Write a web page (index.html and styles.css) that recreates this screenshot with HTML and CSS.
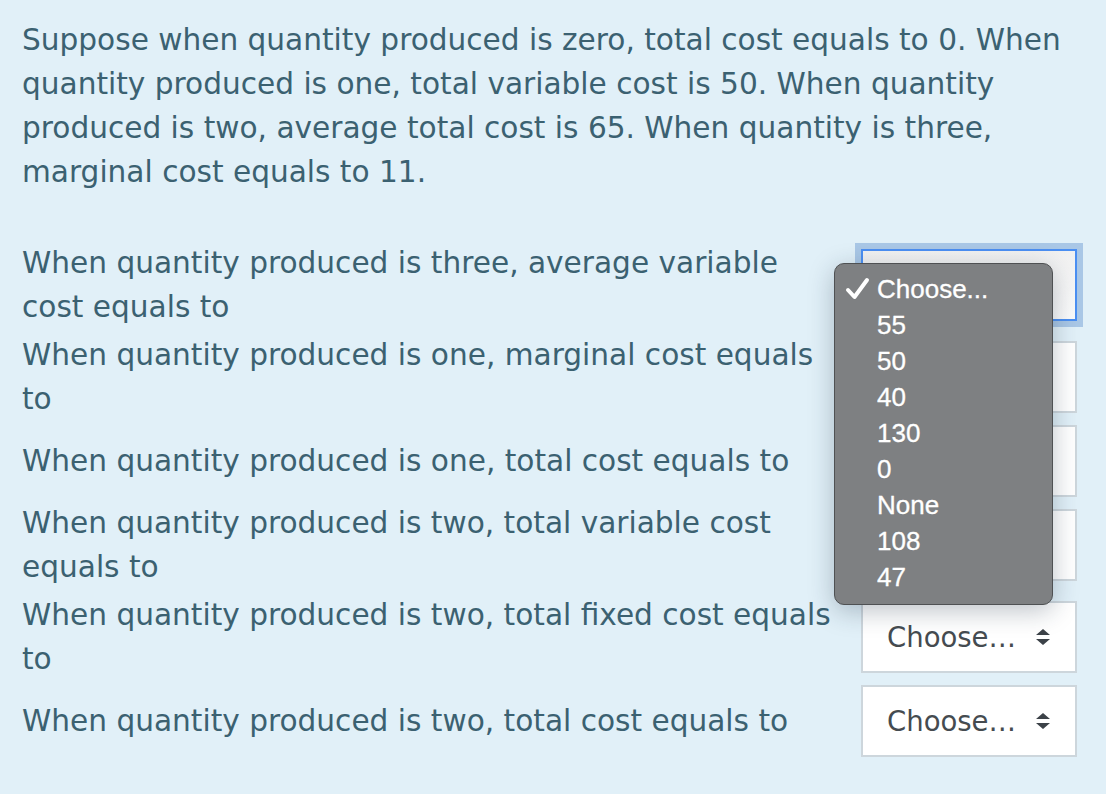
FILE: index.html
```html
<!DOCTYPE html>
<html lang="en">
<head>
<meta charset="utf-8">
<title>Question</title>
<link rel="stylesheet" href="styles.css">
</head>
<body>
<div class="page">
  <p class="intro">Suppose when quantity produced is zero, total cost equals to 0. When quantity produced is one, total variable cost is 50. When quantity produced is two, average total cost is 65. When quantity is three, marginal cost equals to 11.</p>
  <div class="rows">
    <div class="row">
      <div class="label">When quantity produced is three, average variable cost equals to</div>
      <div class="select-wrap">
        <div class="select focused">
          <span class="value">Choose…</span>
          <svg class="arrows" width="16" height="18" viewBox="0 0 16 18"><path d="M8 1 L15 7 L1 7 Z M1 11 L15 11 L8 17 Z" fill="#3c4248"/></svg>
        </div>
        <ul class="menu">
          <li class="checked"><svg class="check" width="26" height="24" viewBox="0 0 26 24"><path d="M3 13 L9.5 20 L22 3" fill="none" stroke="#fff" stroke-width="4" stroke-linecap="round" stroke-linejoin="round"/></svg>Choose...</li>
          <li>55</li>
          <li>50</li>
          <li>40</li>
          <li>130</li>
          <li>0</li>
          <li>None</li>
          <li>108</li>
          <li>47</li>
        </ul>
      </div>
    </div>
    <div class="row">
      <div class="label">When quantity produced is one, marginal cost equals to</div>
      <div class="select-wrap">
        <div class="select"><span class="value">Choose…</span><svg class="arrows" width="16" height="18" viewBox="0 0 16 18"><path d="M8 1 L15 7 L1 7 Z M1 11 L15 11 L8 17 Z" fill="#3c4248"/></svg></div>
      </div>
    </div>
    <div class="row">
      <div class="label">When quantity produced is one, total cost equals to</div>
      <div class="select-wrap">
        <div class="select"><span class="value">Choose…</span><svg class="arrows" width="16" height="18" viewBox="0 0 16 18"><path d="M8 1 L15 7 L1 7 Z M1 11 L15 11 L8 17 Z" fill="#3c4248"/></svg></div>
      </div>
    </div>
    <div class="row">
      <div class="label">When quantity produced is two, total variable cost equals to</div>
      <div class="select-wrap">
        <div class="select"><span class="value">Choose…</span><svg class="arrows" width="16" height="18" viewBox="0 0 16 18"><path d="M8 1 L15 7 L1 7 Z M1 11 L15 11 L8 17 Z" fill="#3c4248"/></svg></div>
      </div>
    </div>
    <div class="row">
      <div class="label">When quantity produced is two, total fixed cost equals to</div>
      <div class="select-wrap">
        <div class="select"><span class="value">Choose…</span><svg class="arrows" width="16" height="18" viewBox="0 0 16 18"><path d="M8 1 L15 7 L1 7 Z M1 11 L15 11 L8 17 Z" fill="#3c4248"/></svg></div>
      </div>
    </div>
    <div class="row">
      <div class="label">When quantity produced is two, total cost equals to</div>
      <div class="select-wrap">
        <div class="select"><span class="value">Choose…</span><svg class="arrows" width="16" height="18" viewBox="0 0 16 18"><path d="M8 1 L15 7 L1 7 Z M1 11 L15 11 L8 17 Z" fill="#3c4248"/></svg></div>
      </div>
    </div>
  </div>
</div>
</body>
</html>
```
FILE: styles.css
```css
html, body {
  margin: 0;
  padding: 0;
  background: #e1f0f8;
}
.page {
  padding: 18px 0 0 22px;
  font-family: "DejaVu Sans", "Liberation Sans", sans-serif;
  font-size: 29.6px;
  line-height: 44px;
  color: #3b6171;
  height: 776px;
  box-sizing: border-box;
  overflow: hidden;
}
.intro {
  margin: 0 0 47px 0;
  width: 1075px;
}
.rows {
  display: flex;
  flex-direction: column;
  gap: 4px;
}
.row {
  display: flex;
  align-items: center;
  gap: 21px;
}
.label {
  flex: 0 0 818px;
}
.select-wrap {
  position: relative;
  width: 216px;
}
.select {
  box-sizing: border-box;
  height: 72px;
  width: 216px;
  border: 2px solid #cdd6dc;
  background: #fff;
  display: flex;
  align-items: center;
  padding: 0 24px 0 24px;
  color: #454b50;
}
.select .value {
  flex: 1;
  white-space: nowrap;
  overflow: hidden;
  font-size: 27.5px;
}
.select .arrows {
  flex: none;
}
.select.focused {
  border-color: #4b8ff2;
  box-shadow: 0 0 0 6px #a9c7e6;
  background: linear-gradient(#f1f1f1, #fbfbfb);
}
.menu {
  position: absolute;
  left: -27px;
  top: 14px;
  width: 219px;
  margin: 0;
  padding: 7px 0 9px 0;
  box-sizing: border-box;
  list-style: none;
  background: #7e8082;
  border: 1px solid #4f5153;
  border-radius: 10px;
  box-shadow: 0 6px 26px rgba(20, 40, 60, 0.28);
  font-family: "Liberation Sans", Arial, sans-serif;
  font-size: 26px;
  line-height: 36px;
  color: #fff;
  z-index: 10;
}
.menu li {
  position: relative;
  padding-left: 42px;
  -webkit-text-stroke: 0.3px #fff;
}
.menu .check {
  position: absolute;
  left: 10px;
  top: 6px;
}
```
